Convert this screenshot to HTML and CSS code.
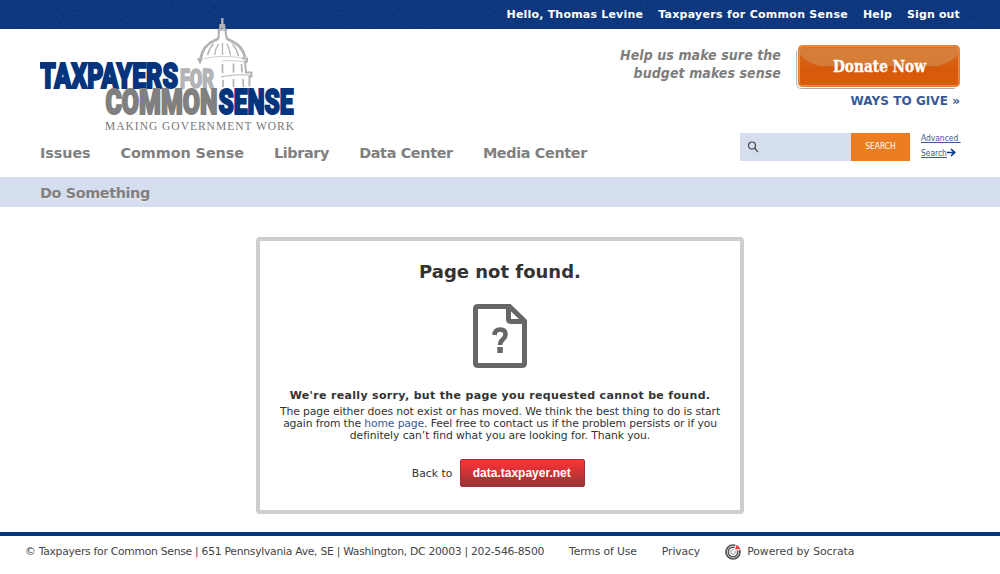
FILE: index.html
```html
<!DOCTYPE html>
<html lang="en">
<head>
<meta charset="utf-8">
<title>Page not found | Taxpayers for Common Sense</title>
<link rel="stylesheet" href="styles.css">
</head>
<body>
<div class="topbar">
  <svg class="grain" width="1000" height="29" aria-hidden="true">
    <filter id="noise" x="0" y="0" width="100%" height="100%"><feTurbulence type="fractalNoise" baseFrequency="0.6" numOctaves="2"/><feColorMatrix values="0 0 0 0 .25  0 0 0 0 .4  0 0 0 0 .62  .9 0 0 0 -.3"/></filter>
    <rect width="1000" height="29" filter="url(#noise)"/>
  </svg>
  <nav class="account"><a class="user">Hello, Thomas Levine</a><a class="org">Taxpayers for Common Sense</a><a>Help</a><a>Sign out</a></nav>
</div>
<header class="header">
  <div class="brand-row">
    <svg class="logo" width="262" height="116" viewBox="40 17 262 116" role="img" aria-label="Taxpayers for Common Sense">
      <g fill="none" stroke="#b2b3b6">
        <path d="M222.300 18v7" stroke-width="2.400"/>
        <path d="M219.800 24.500h5v3h-5z" fill="#b2b3b6" stroke-width="1"/>
        <path d="M218.500 38l.5-8 2-2.500h2.500l2 2.500 1 8" stroke-width="2.200"/>
        <path d="M217.500 30h10" stroke-width="1.400"/>
        <path d="M218.500 38q-1 1.500-4 2.500c-7 3-12.500 9-14 18.500M226.500 38q1 1.500 4 2.500c8 3.500 13 9 14.500 17" stroke-width="2.800"/>
        <path d="M197.500 58.500h5l-2.500 5z" fill="#b2b3b6" stroke-width="1"/>
        <path d="M204 59c10-3.500 29-3 41-.5M222 61c8-.8 16-.2 25 1.500" stroke-width=".9" opacity=".7"/>
        <path d="M213.500 44c-3 3-5 7-6 11M218.500 44c-2 3-3.500 7-4 11M222.500 43v12M227 44c2 3.500 3 7.500 3.500 11.500M232.500 44c3 3.500 5 7.500 6 12" stroke-width="1.300"/>
        <path d="M242 58.500h5v3h-2l1 11h5.500v4h-2v10" stroke-width="2"/>
        <path d="M221 77c9-2 20-3 30-1.500" stroke-width="1"/>
        <path d="M222.500 64v9M233.500 63.500v9M241.500 64l.5 8.500M223 80v7M233.500 79v8M243 79l.5 8" stroke-width="1.700"/>
      </g>
      <g class="wordmark">
        <text x="40" y="88" font-size="35" textLength="138" lengthAdjust="spacingAndGlyphs" class="navy">TAXPAYERS</text>
        <text x="180" y="87.500" font-size="25.500" textLength="34" lengthAdjust="spacingAndGlyphs" class="silver">FOR</text>
        <text x="105.500" y="114" font-size="35" textLength="112" lengthAdjust="spacingAndGlyphs" class="gray">COMMON</text>
        <text x="218.500" y="114" font-size="35" textLength="75" lengthAdjust="spacingAndGlyphs" class="navy">SENSE</text>
      </g>
      <text class="tagline" x="105" y="129.500" textLength="189">MAKING GOVERNMENT WORK</text>
    </svg>
    <div class="give">
      <p class="pitch">Help us make sure the<br>budget makes sense</p>
      <div class="donate-col">
        <svg class="donate" width="164" height="45" viewBox="0 0 164 45">
          <defs><linearGradient id="orange" x1="0" y1="0" x2="0" y2="1"><stop offset="0" stop-color="#d66c22"/><stop offset=".6" stop-color="#d7590b"/><stop offset="1" stop-color="#db5c0c"/></linearGradient></defs>
          <path d="M.7 6v32q0 5.500 5 5.500h153" fill="none" stroke="#aaa"/>
          <rect x="2.500" y=".5" width="161" height="41" rx="4" fill="url(#orange)" stroke="#ea7d27"/>
          <path d="M4 2.500h158v7q-7 8-20 11.500H24Q11 18 4 9.500z" fill="#d5803c" opacity=".92"/>
          <rect x="3.500" y="1.500" width="159" height="39" rx="3" fill="none" stroke="#e58c48"/>
          <text x="37" y="27" textLength="93" lengthAdjust="spacingAndGlyphs">Donate Now</text>
        </svg>
        <a class="ways">WAYS TO GIVE »</a>
      </div>
    </div>
  </div>
  <div class="menu-row">
    <nav class="menu"><a class="wide">Issues</a><a class="wide">Common Sense</a><a>Library</a><a>Data Center</a><a>Media Center</a></nav>
    <div class="search">
      <div class="field"><svg width="12" height="12" viewBox="0 0 12 12"><circle cx="4" cy="4.500" r="3.500"/><path d="M6.500 7l3.500 4.200"/></svg></div>
      <div class="search-btn">SEARCH</div>
      <div class="advanced"><a>Advanced&nbsp;<br>Search</a><svg width="9" height="9" viewBox="0 0 9 9"><path d="M0 4.500h7.500M4 1l3.700 3.500L4 8"/></svg></div>
    </div>
  </div>
</header>
<div class="submenu"><a>Do Something</a></div>
<main class="panel">
  <h1>Page not found.</h1>
  <svg class="missing" width="54" height="64" viewBox="0 0 54 64">
    <path d="M5 2.500h31.500l15 14.500V59q0 2.500-2.500 2.500H5Q2.500 61.500 2.500 59V5Q2.500 2.500 5 2.500zM35.500 3v12q0 2.500 2.500 2.500h13" fill="none" stroke="#666" stroke-width="5"/>
    <path d="M21.500 31q.3-5.500 5.800-5.500 5.200 0 5.200 5 0 2.500-2.700 5-2.700 2.200-2.700 5.500" fill="none" stroke="#666" stroke-width="4.600"/>
    <path d="M24.300 43h5.500v6h-5.500z" fill="#666"/>
  </svg>
  <p class="sorry">We're really sorry, but the page you requested cannot be found.</p>
  <p class="detail">The page either does not exist or has moved. We think the best thing to do is start<br><span class="tight">again from the <a>home page</a>. Feel free to contact us if the problem persists or if you</span><br>definitely can’t find what you are looking for. Thank you.</p>
  <div class="back"><span>Back to</span><a class="button">data.taxpayer.net</a></div>
</main>
<footer class="footer">
  <span class="address">© Taxpayers for Common Sense | 651 Pennsylvania Ave, SE | Washington, DC 20003 | 202-546-8500</span>
  <a>Terms of Use</a>
  <a>Privacy</a>
  <a class="powered"><svg width="16" height="16" viewBox="0 0 16 16"><g fill="none" stroke="#555"><circle cx="8" cy="8" r="7" stroke-width="1.700"/><circle cx="8" cy="8" r="4.700" stroke-width="1.600"/><circle cx="8" cy="8" r="2.300" stroke="#999"/></g><path d="M8.500 7.500L10.500 0.500l5 5z" fill="#fff"/><path d="M10 5.500l1.500-4.500 4 3.800z" fill="#f33"/></svg>Powered by Socrata</a>
</footer>
</body>
</html>
```
FILE: styles.css
```css
* { box-sizing: border-box; }
body {
  margin: 0;
  background: #fff;
  color: #333;
  font-family: "DejaVu Sans", sans-serif;
  font-size: 10.8px;
}
p, h1 { margin: 0; }
svg { display: block; }
.topbar { position: relative; height: 29px; background: #0a347c; }
.grain { position: absolute; left: 0; top: 0; opacity: .2; }
.account {
  position: relative;
  display: flex;
  justify-content: flex-end;
  gap: 15px;
  padding-right: 40px;
  line-height: 29px;
  font-size: 11px;
  font-weight: bold;
  letter-spacing: .15px;
  color: #fff;
}
.user { letter-spacing: .2px; }
.org { letter-spacing: .28px; }
.header { height: 148px; padding: 0 40px; }
.brand-row { display: flex; justify-content: space-between; height: 104px; }
.logo { position: relative; margin-top: -12px; flex: none; }
.wordmark { font-family: Roboto, sans-serif; font-weight: 900; }
.wordmark text { stroke-width: 2; }
.navy { fill: #04347c; stroke: #04347c; }
.wordmark .silver { fill: #b2b3b6; stroke: #b2b3b6; stroke-width: 1.5; }
.gray { fill: #808080; stroke: #808080; }
.tagline { font-family: "Liberation Serif", serif; font-size: 11.5px; fill: #777; }
.give { display: flex; gap: 15px; padding-top: 16px; }
.pitch {
  padding-top: 1px;
  text-align: right;
  font: italic bold 14px/18px "DejaVu Sans Condensed", "DejaVu Sans", sans-serif;
  letter-spacing: .08px;
  color: #7d7d7d;
}
.donate-col { text-align: right; }
.donate text { font-family: "DejaVu Serif Condensed", "DejaVu Serif", serif; font-size: 16px; font-weight: bold; fill: #fff; stroke: #fff; stroke-width: .3; }
.ways { display: block; padding-top: 3px; font-size: 12px; line-height: 16px; font-weight: bold; letter-spacing: .06px; color: #395998; }
.menu-row { display: flex; justify-content: space-between; }
.menu { display: flex; gap: 30px; padding-top: 10px; font-size: 14.4px; line-height: 20px; font-weight: bold; letter-spacing: -.35px; color: #808080; }
.menu .wide { letter-spacing: -.08px; }
.search { display: flex; height: 28px; }
.field { width: 111px; padding: 8px; background: #d5deee; }
.field svg { fill: none; stroke: #444; stroke-width: 1.2; }
.search-btn { width: 59px; background: #ec7c22; color: #fff; text-align: center; font: 8.4px/27px "DejaVu Sans Condensed", sans-serif; }
.advanced { width: 50px; padding-left: 11px; white-space: nowrap; font: 8.4px/15px "DejaVu Sans Condensed", sans-serif; color: #395998; margin-top: -2px; }
.advanced a { text-decoration: underline; }
.advanced svg { display: inline-block; vertical-align: -1px; fill: none; stroke: #04347c; stroke-width: 1.6; }
.submenu { height: 30px; padding-left: 40px; background: #d5deee; color: #808080; font-size: 14.4px; line-height: 32px; font-weight: bold; letter-spacing: -.38px; text-shadow: 0 1px 1px #eee; }
.panel {
  display: flex;
  flex-direction: column;
  align-items: center;
  width: 488px;
  height: 277px;
  margin: 30px auto 18px;
  padding-top: 20px;
  border: 4px solid #cecece;
  border-radius: 4px;
  text-align: center;
}
h1 { font-size: 18px; line-height: 22px; }
.missing { margin-top: 21px; }
.sorry { margin-top: 21px; font-size: 11px; line-height: 14px; font-weight: bold; letter-spacing: .33px; }
.detail { margin-top: 3px; line-height: 12px; white-space: nowrap; letter-spacing: -.09px; }
.tight { letter-spacing: -.13px; }
.detail a { color: #395998; }
.back { display: flex; align-items: center; gap: 8px; margin-top: 17px; margin-right: 3px; }
.button {
  width: 125px;
  height: 28px;
  border: 1px solid #a03033;
  border-radius: 2px;
  padding-right: 2px;
  background: linear-gradient(#ff3337, #993333);
  color: #fff;
  font: bold 12px/26px "Liberation Sans", sans-serif;
}
.footer { display: flex; align-items: center; gap: 25px; height: 42px; padding: 0 25px 7px; border-top: 4px solid #04347c; color: #444; white-space: nowrap; letter-spacing: -.12px; }
.address { letter-spacing: -.286px; }
.powered { display: flex; align-items: center; gap: 6px; letter-spacing: 0; }
```
